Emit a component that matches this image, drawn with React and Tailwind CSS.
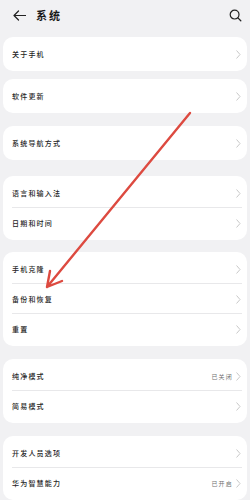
import React from "react"

const groups = [
  { mt: "mt-[7px]", rows: [{ label: "关于手机" }] },
  { mt: "mt-[8px]", rows: [{ label: "软件更新" }] },
  { mt: "mt-[13px]", rows: [{ label: "系统导航方式" }] },
  { mt: "mt-[16px]", rows: [{ label: "语言和输入法" }, { label: "日期和时间" }] },
  { mt: "mt-[12px]", rows: [{ label: "手机克隆" }, { label: "备份和恢复" }, { label: "重置" }] },
  { mt: "mt-[13px]", rows: [{ label: "纯净模式", value: "已关闭" }, { label: "简易模式" }] },
  { mt: "mt-[13px]", rows: [{ label: "开发人员选项" }, { label: "华为智慧能力", value: "已开启" }] },
]

function Chevron() {
  return (
    <svg width="5" height="9" viewBox="0 0 5 9" fill="none">
      <path d="M0.8 0.8L4 4.5L0.8 8.2" stroke="#c8c8c8" strokeWidth="1" strokeLinecap="round" strokeLinejoin="round" />
    </svg>
  )
}

function Row({ label, value, last }) {
  return (
    <div className="relative flex items-center h-[30px] pl-[9px] pr-[6px]">
      <span className="flex-1 text-[7px] tracking-[1.2px] text-[#262626] font-medium">{label}</span>
      {value && <span className="text-[6px] tracking-[1.2px] text-[#6f6f6f] mr-[3px]">{value}</span>}
      <Chevron />
      {!last && <div className="absolute bottom-0 left-[9px] right-[5px] h-px bg-[#e8e8ea]" />}
    </div>
  )
}

export default function App() {
  return (
    <div
      className="relative w-[250px] h-[500px] overflow-hidden bg-[#f1f1f3]"
      style={{ fontFamily: '"Noto Sans CJK SC", "Noto Sans", sans-serif' }}
    >
      {/* header */}
      <div className="flex items-center h-[30px] pl-[13px] pr-[8px]">
        <svg width="13" height="11" viewBox="0 0 13 11" fill="none">
          <path d="M12.5 5.5H1M5.5 1L1 5.5L5.5 10" stroke="#222" strokeWidth="1.2" strokeLinecap="round" strokeLinejoin="round" />
        </svg>
        <span className="ml-[10px] flex-1 text-[11px] tracking-[2px] font-bold text-[#1a1a1a]">系统</span>
        <svg width="13" height="13" viewBox="0 0 13 13" fill="none">
          <circle cx="5.6" cy="5.6" r="4.4" stroke="#222" strokeWidth="1.2" />
          <path d="M8.9 8.9L11.8 11.8" stroke="#222" strokeWidth="1.3" strokeLinecap="round" />
        </svg>
      </div>

      <div className="px-[3px]">
        {groups.map((g, i) => (
          <div key={i} className={`${g.mt} bg-white rounded-[10px] py-[2px]`}>
            {g.rows.map((r, j) => (
              <Row key={j} label={r.label} value={r.value} last={j === g.rows.length - 1} />
            ))}
          </div>
        ))}
      </div>

      {/* red annotation arrow */}
      <svg className="absolute inset-0 pointer-events-none" width="250" height="500" viewBox="0 0 250 500">
        <path
          d="M190 113L47 287M62 281L47 287L50 271"
          stroke="#dd4a40"
          strokeWidth="2.4"
          strokeLinecap="round"
          strokeLinejoin="round"
          fill="none"
        />
      </svg>
    </div>
  )
}
